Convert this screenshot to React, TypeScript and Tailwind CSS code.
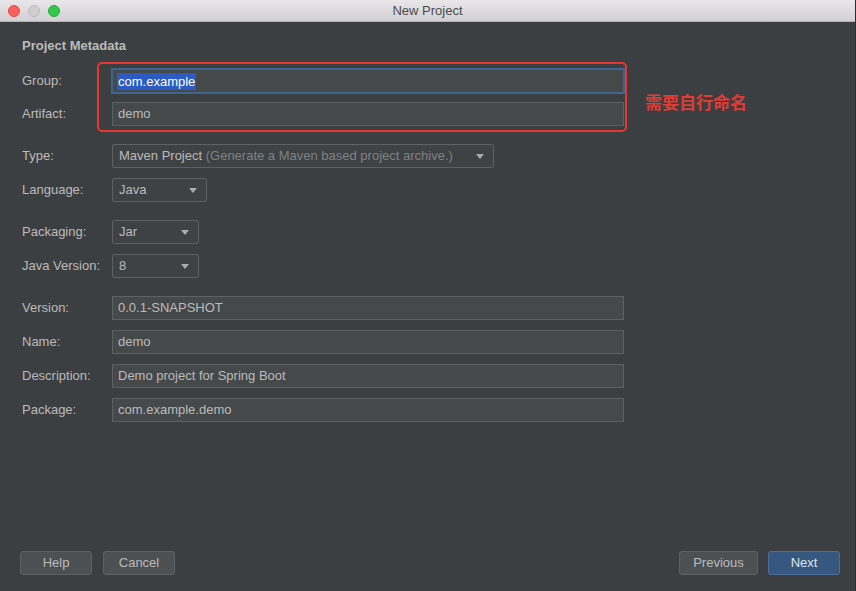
import React from 'react';

const font = { fontFamily: '"Liberation Sans", "Noto Sans CJK SC", Arial, sans-serif' };

function Arrow() {
  return (
    <svg width="8" height="5" viewBox="0 0 8 5" className="shrink-0">
      <path d="M0 0 L8 0 L4 5 Z" fill="#a9abad" />
    </svg>
  );
}

function TextRow({ label, value, mt }: { label: string; value: string; mt: string }) {
  return (
    <div className={`flex items-center h-6 ${mt}`}>
      <span className="w-[90px] text-[13px] text-[#bbbbbb]">{label}</span>
      <div className="w-[512px] h-6 bg-[#45494a] border border-[#5d6162] px-[5px] flex items-center text-[13px] text-[#bbbbbb]">
        {value}
      </div>
    </div>
  );
}

function ComboRow({
  label,
  value,
  hint,
  width,
  mt,
}: {
  label: string;
  value: string;
  hint?: string;
  width: string;
  mt: string;
}) {
  return (
    <div className={`flex items-center h-6 ${mt}`}>
      <span className="w-[90px] text-[13px] text-[#bbbbbb]">{label}</span>
      <div
        className={`${width} h-6 bg-[#3e4244] border border-[#5d6162] rounded-[2px] pl-[6px] pr-[9px] flex items-center justify-between text-[13px]`}
      >
        <span className="text-[#bbbbbb] whitespace-nowrap">
          {value}
          {hint && <span className="text-[#7f8183]"> {hint}</span>}
        </span>
        <Arrow />
      </div>
    </div>
  );
}

export default function App() {
  return (
    <div
      className="relative w-[856px] h-[591px] bg-[#3c3f41] flex flex-col overflow-hidden border-r border-[#2b2d2e]"
      style={font}
    >
      {/* title bar */}
      <div className="relative h-[22px] shrink-0 bg-gradient-to-b from-[#e9e7e9] to-[#d2d0d2] border-b border-[#b5b3b5] flex items-center justify-center">
        <div className="absolute left-[8px] top-[5px] flex gap-[8px]">
          <span className="w-3 h-3 rounded-full bg-[#fc605c] border border-[#de4a45]" />
          <span className="w-3 h-3 rounded-full bg-[#d0ced0] border border-[#bdbbbd]" />
          <span className="w-3 h-3 rounded-full bg-[#34c84a] border border-[#27a83a]" />
        </div>
        <span className="text-[13px] text-[#4b4b4b]">New Project</span>
      </div>

      {/* form */}
      <div className="flex flex-col pl-[22px] pt-[16px]">
        <div className="h-4 leading-4 text-[13px] font-bold text-[#bbbbbb]">Project Metadata</div>

        <div className="flex items-center h-[26px] mt-[14px]">
          <span className="w-[89px] text-[13px] text-[#bbbbbb]">Group:</span>
          <div className="w-[514px] h-[26px] bg-[#45494a] border-2 border-[#3e6590] px-[4px] flex items-center text-[13px]">
            <span className="bg-[#2c5bc4] text-white px-[1px] leading-[17px]">com.example</span>
          </div>
        </div>
        <TextRow label="Artifact:" value="demo" mt="mt-[8px]" />

        <ComboRow
          label="Type:"
          value="Maven Project"
          hint="(Generate a Maven based project archive.)"
          width="w-[382px]"
          mt="mt-[18px]"
        />
        <ComboRow label="Language:" value="Java" width="w-[95px]" mt="mt-[10px]" />
        <ComboRow label="Packaging:" value="Jar" width="w-[87px]" mt="mt-[18px]" />
        <ComboRow label="Java Version:" value="8" width="w-[87px]" mt="mt-[10px]" />

        <TextRow label="Version:" value="0.0.1-SNAPSHOT" mt="mt-[18px]" />
        <TextRow label="Name:" value="demo" mt="mt-[10px]" />
        <TextRow label="Description:" value="Demo project for Spring Boot" mt="mt-[10px]" />
        <TextRow label="Package:" value="com.example.demo" mt="mt-[10px]" />
      </div>

      <div className="flex-1" />

      {/* buttons */}
      <div className="flex items-center justify-between pl-[20px] pr-[15px] pb-[16px]">
        <div className="flex gap-[11px]">
          <button className="w-[72px] h-6 rounded-[3px] bg-[#4c5052] border border-[#5e6264] text-[13px] text-[#bbbbbb]">
            Help
          </button>
          <button className="w-[72px] h-6 rounded-[3px] bg-[#4c5052] border border-[#5e6264] text-[13px] text-[#bbbbbb]">
            Cancel
          </button>
        </div>
        <div className="flex gap-[10px]">
          <button className="w-[79px] h-6 rounded-[3px] bg-[#4c5052] border border-[#5e6264] text-[13px] text-[#bbbbbb]">
            Previous
          </button>
          <button className="w-[72px] h-6 rounded-[3px] bg-[#365880] border border-[#4a6f98] text-[13px] text-[#dfe3e8]">
            Next
          </button>
        </div>
      </div>

      {/* annotation */}
      <div className="absolute left-[97px] top-[62px] w-[530px] h-[70px] border-2 border-[#e8352f] rounded-[5px]" />
      <div className="absolute left-[645px] top-[94px] text-[17px] font-bold leading-5 text-[#e23b33]">需要自行命名</div>
    </div>
  );
}
